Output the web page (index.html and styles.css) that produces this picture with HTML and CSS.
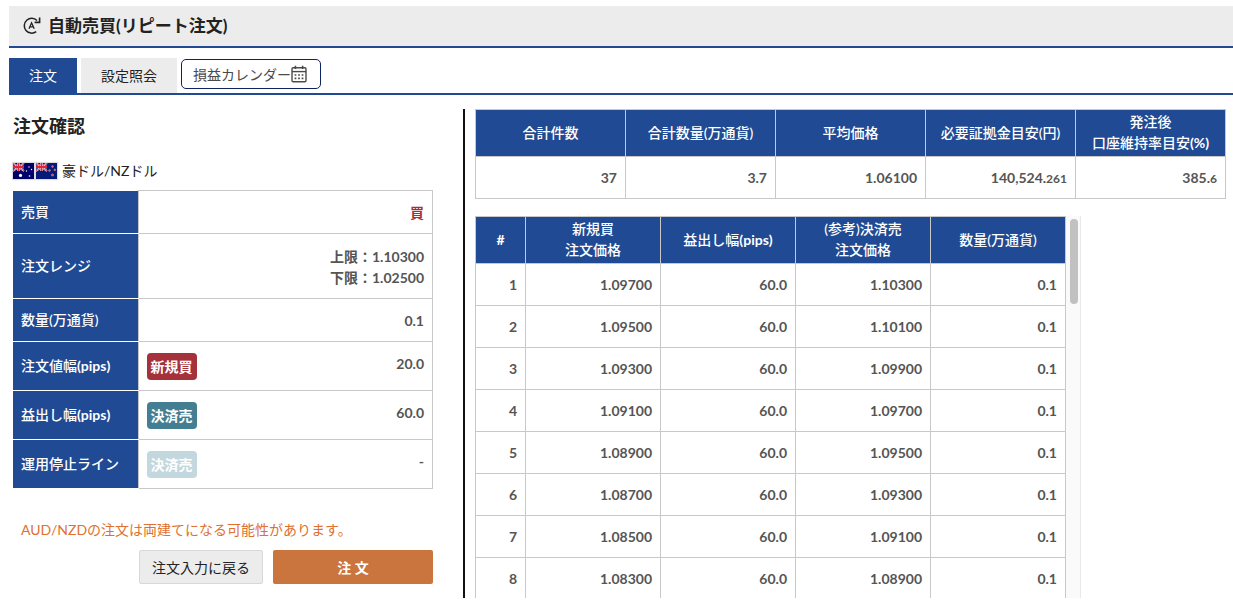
FILE: index.html
```html
<!DOCTYPE html>
<html lang="ja">
<head>
<meta charset="utf-8">
<title>自動売買(リピート注文)</title>
<link rel="stylesheet" href="styles.css">
</head>
<body>
<header class="page-header">
  <svg class="repeat-icon" viewBox="0 0 20 20" aria-hidden="true">
    <path d="M14.2 15.6A7.4 7.4 0 1 1 15 4.6" fill="none" stroke="#222" stroke-width="1.5"/>
    <path d="M17.6 1.6V6.4H12.6" fill="none" stroke="#222" stroke-width="1.6"/>
    <path d="M7 12.8L9.6 6.8L12.2 12.8M8 10.8H11.2" fill="none" stroke="#222" stroke-width="1.3"/>
  </svg>
  <h1 class="page-title">自動売買(リピート注文)</h1>
</header>
<nav class="tabs">
  <button type="button" class="tab tab-active">注文</button>
  <button type="button" class="tab">設定照会</button>
  <button type="button" class="calendar-button">損益カレンダー
    <svg class="calendar-icon" viewBox="0 0 16 18" aria-hidden="true">
      <rect x="1" y="2.8" width="14" height="14" rx="1.2" fill="none" stroke="#4a4a4a" stroke-width="1.4"/>
      <path d="M1 6.6H15" stroke="#4a4a4a" stroke-width="1.4"/>
      <path d="M3.6 0.8H5.2V4H3.6ZM10.8 0.8H12.4V4H10.8Z" fill="#4a4a4a"/>
      <path d="M3.6 10H12.4M3.6 13.4H12.4" stroke="#4a4a4a" stroke-width="1.6" stroke-dasharray="1.76 1.76"/>
    </svg>
  </button>
</nav>
<main class="content">
  <section class="confirm">
    <h2 class="confirm-title">注文確認</h2>
    <p class="pair">
      <svg class="flag" viewBox="0 0 21 16" aria-hidden="true">
        <rect width="21" height="16" fill="#00006b"/>
        <path d="M0 0L11 8M11 0L0 8" stroke="#fff" stroke-width="1.6"/>
        <path d="M0 0L11 8M11 0L0 8" stroke="#e0344a" stroke-width="1"/>
        <path d="M5.5 0V8M0 4H11" stroke="#fff" stroke-width="2.6"/>
        <path d="M5.5 0V8M0 4H11" stroke="#e0243a" stroke-width="1.8"/>
        <g fill="#fff"><circle cx="7.5" cy="12.4" r="1.6"/><circle cx="16" cy="4" r="0.7"/><circle cx="13.5" cy="8" r="0.7"/><circle cx="18.5" cy="6.5" r="0.7"/><circle cx="16.5" cy="13" r="0.8"/></g>
      </svg>
      <svg class="flag" viewBox="0 0 21 16" aria-hidden="true">
        <rect width="21" height="16" fill="#061b77"/>
        <path d="M0 0L11 8M11 0L0 8" stroke="#fff" stroke-width="1.6"/>
        <path d="M0 0L11 8M11 0L0 8" stroke="#e0344a" stroke-width="1"/>
        <path d="M5.5 0V8M0 4H11" stroke="#fff" stroke-width="2.6"/>
        <path d="M5.5 0V8M0 4H11" stroke="#e0243a" stroke-width="1.8"/>
        <g fill="#e0405a" stroke="#fff" stroke-width="0.3"><circle cx="16.5" cy="3.5" r="0.9"/><circle cx="13.5" cy="7.5" r="0.9"/><circle cx="18.8" cy="6.8" r="0.9"/><circle cx="16.5" cy="12" r="1.1"/></g>
      </svg>
      <span class="pair-name">豪ドル/NZドル</span>
    </p>
    <table class="detail">
      <tr><th scope="row">売買</th><td class="buy">買</td></tr>
      <tr><th scope="row">注文レンジ</th><td class="range">上限：1.10300<br>下限：1.02500</td></tr>
      <tr><th scope="row">数量(万通貨)</th><td>0.1</td></tr>
      <tr><th scope="row">注文値幅<span class="unit">(pips)</span></th><td><div class="tagged"><span class="tag tag-buy">新規買</span><span>20.0</span></div></td></tr>
      <tr><th scope="row">益出し幅<span class="unit">(pips)</span></th><td><div class="tagged"><span class="tag tag-sell">決済売</span><span>60.0</span></div></td></tr>
      <tr><th scope="row">運用停止ライン</th><td><div class="tagged"><span class="tag tag-off">決済売</span><span>-</span></div></td></tr>
    </table>
    <p class="notice">AUD/NZDの注文は両建てになる可能性があります。</p>
    <div class="actions">
      <button type="button" class="back">注文入力に戻る</button>
      <button type="button" class="submit">注 文</button>
    </div>
  </section>
  <section class="results">
    <table class="grid summary">
      <thead><tr><th>合計件数</th><th>合計数量(万通貨)</th><th>平均価格</th><th>必要証拠金目安(円)</th><th>発注後<br>口座維持率目安<span class="unit">(%)</span></th></tr></thead>
      <tbody><tr><td>37</td><td>3.7</td><td>1.06100</td><td>140,524.<small>261</small></td><td>385.<small>6</small></td></tr></tbody>
    </table>
    <div class="order-list">
      <table class="grid orders">
        <thead><tr><th class="num"><span class="unit">#</span></th><th>新規買<br>注文価格</th><th>益出し幅<span class="unit">(pips)</span></th><th>(参考)決済売<br>注文価格</th><th>数量(万通貨)</th></tr></thead>
        <tbody>
          <tr><td>1</td><td>1.09700</td><td>60.0</td><td>1.10300</td><td>0.1</td></tr>
          <tr><td>2</td><td>1.09500</td><td>60.0</td><td>1.10100</td><td>0.1</td></tr>
          <tr><td>3</td><td>1.09300</td><td>60.0</td><td>1.09900</td><td>0.1</td></tr>
          <tr><td>4</td><td>1.09100</td><td>60.0</td><td>1.09700</td><td>0.1</td></tr>
          <tr><td>5</td><td>1.08900</td><td>60.0</td><td>1.09500</td><td>0.1</td></tr>
          <tr><td>6</td><td>1.08700</td><td>60.0</td><td>1.09300</td><td>0.1</td></tr>
          <tr><td>7</td><td>1.08500</td><td>60.0</td><td>1.09100</td><td>0.1</td></tr>
          <tr><td>8</td><td>1.08300</td><td>60.0</td><td>1.08900</td><td>0.1</td></tr>
        </tbody>
      </table>
      <div class="scroll-track"><div class="scroll-thumb"></div></div>
    </div>
  </section>
</main>
</body>
</html>
```
FILE: styles.css
```css
* { box-sizing: border-box; }
body {
  margin: 0;
  padding: 6px 0 10px 9px;
  height: 100vh;
  display: flex;
  flex-direction: column;
  overflow: hidden;
  background: #fff;
  color: #222;
  font: 14px/21px Lato, "Noto Sans CJK JP", sans-serif;
}
h1, h2, p { margin: 0; }
button { font: inherit; color: inherit; cursor: pointer; }
table { border-collapse: collapse; }

.page-header {
  flex: none;
  display: flex;
  align-items: center;
  gap: 6px;
  height: 42px;
  padding: 0 13px;
  background: #ececec;
  border-bottom: 2px solid #204a94;
}
.repeat-icon { width: 20px; height: 20px; }
.page-title { font-size: 17px; line-height: 24px; font-weight: 700; }

.tabs {
  flex: none;
  display: flex;
  gap: 4px;
  margin-top: 10px;
  height: 37px;
  border-bottom: 2px solid #204a94;
}
.tab { padding: 0 20px; border: 0; background: #ececec; }
.tab-active { background: #204a94; color: #fff; }
.calendar-button {
  display: flex;
  align-items: center;
  height: 30px;
  margin-top: 1px;
  padding: 0 13px 0 11px;
  border: 1px solid #0c2461;
  border-radius: 5px;
  background: #fff;
  color: #4a4a4a;
}
.calendar-icon { width: 16px; height: 18px; }

.content { flex: 1; min-height: 0; display: flex; margin-top: 14px; }
.confirm { flex: none; width: 424px; padding-left: 4px; }
.confirm-title { margin-top: 4px; font-size: 18px; line-height: 26px; font-weight: 700; }
.pair { display: flex; align-items: center; gap: 2px; margin-top: 21px; }
.flag { width: 21px; height: 16px; box-shadow: 0 0 1px 1px #ddd; }
.pair-name { margin-left: 3px; }

.detail { width: 100%; margin-top: 9px; }
.detail th {
  width: 125px;
  padding: 10px 8px 11px;
  border-bottom: 1px solid #fff;
  background: #204a94;
  color: #fff;
  text-align: left;
  font-weight: 500;
}
.detail td {
  padding: 11px 8px 10px;
  border: 1px solid #c8c8c8;
  color: #555;
  font-weight: 700;
  text-align: right;
}
.detail .buy { color: #a72f39; }
.detail .range { height: 65px; }
.unit { font-weight: 700; }
.tagged { display: flex; justify-content: space-between; }
.tag { padding: 3px 4px; border-radius: 4px; color: #fff; }
.tag-buy { background: #a5313a; }
.tag-sell { background: #437e92; }
.tag-off { background: #c3d7de; }
.notice { margin: 30px 0 10px 8px; color: #e0702e; }
.actions { display: flex; justify-content: flex-end; gap: 10px; }
.back, .submit { height: 34px; border-radius: 2px; }
.back { width: 124px; padding: 0; border: 1px solid #d8d8d8; background: #ececec; }
.submit { width: 160px; border: 0; background: #cb753e; color: #fff; font-weight: 700; }

.results {
  flex: 1;
  min-width: 0;
  display: flex;
  flex-direction: column;
  margin-left: 30px;
  padding: 0 7px 0 10px;
  border-left: 2px solid #111;
}
.grid { table-layout: fixed; }
.grid th, .grid td { border: 1px solid #c8c8c8; }
.grid th {
  height: 47px;
  padding: 0 0 2px;
  background: #204a94;
  color: #fff;
  font-weight: 500;
}
.grid td {
  height: 42px;
  padding: 0 8px;
  color: #555;
  font-weight: 700;
  text-align: right;
}
.grid small { font-size: 12px; }
.summary { width: 100%; }
.order-list { flex: 1; min-height: 0; display: flex; margin-top: 17px; overflow: hidden; }
.orders { width: 591px; align-self: flex-start; }
.orders .num { width: 50px; }
.scroll-track { width: 15px; padding: 3px 3px 0 4px; background: #fafafa; border-right: 1px solid #e8e8e8; }
.scroll-thumb { width: 8px; height: 85px; border-radius: 4px; background: #c1c1c1; }
```
